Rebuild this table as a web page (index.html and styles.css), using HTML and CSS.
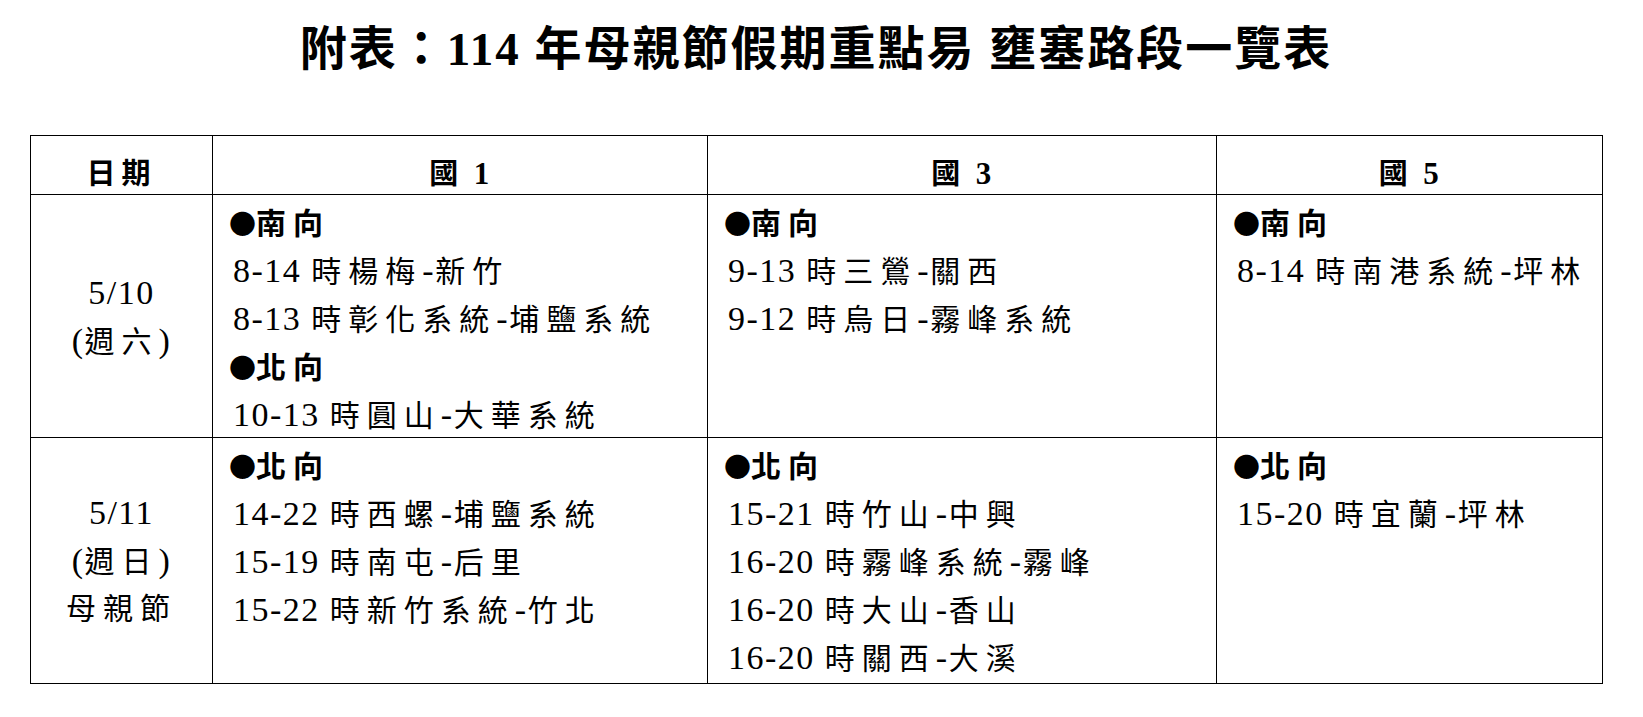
FILE: index.html
```html
<!DOCTYPE html>
<html lang="zh-Hant">
<head>
<meta charset="utf-8">
<title>附表：114 年母親節假期重點易壅塞路段一覽表</title>
<link rel="stylesheet" href="styles.css">
</head>
<body>
<div class="sheet">
  <h1 class="title">附表：114 年母親節假期重點易 壅塞路段一覽表</h1>
  <table class="grid">
    <colgroup>
      <col class="w-date">
      <col class="w-n1">
      <col class="w-n3">
      <col class="w-n5">
    </colgroup>
    <thead>
      <tr>
        <th><span class="c">日期</span></th>
        <th><span class="c">國</span> 1</th>
        <th><span class="c">國</span> 3</th>
        <th><span class="c">國</span> 5</th>
      </tr>
    </thead>
    <tbody>
      <tr>
        <td class="date">
          <div class="dl">5/10</div>
          <div class="dl">(<span class="c">週六</span>)</div>
        </td>
        <td>
          <div class="ln hd"><span class="b">●</span><span class="c">南向</span></div>
          <div class="ln">8-14 <span class="c">時楊梅</span>-<span class="c">新竹</span></div>
          <div class="ln">8-13 <span class="c">時彰化系統</span>-<span class="c">埔鹽系統</span></div>
          <div class="ln hd"><span class="b">●</span><span class="c">北向</span></div>
          <div class="ln">10-13 <span class="c">時圓山</span>-<span class="c">大華系統</span></div>
        </td>
        <td>
          <div class="ln hd"><span class="b">●</span><span class="c">南向</span></div>
          <div class="ln">9-13 <span class="c">時三鶯</span>-<span class="c">關西</span></div>
          <div class="ln">9-12 <span class="c">時烏日</span>-<span class="c">霧峰系統</span></div>
        </td>
        <td>
          <div class="ln hd"><span class="b">●</span><span class="c">南向</span></div>
          <div class="ln">8-14 <span class="c">時南港系統</span>-<span class="c">坪林</span></div>
        </td>
      </tr>
      <tr class="last">
        <td class="date">
          <div class="dl">5/11</div>
          <div class="dl">(<span class="c">週日</span>)</div>
          <div class="dl"><span class="c">母親節</span></div>
        </td>
        <td>
          <div class="ln hd"><span class="b">●</span><span class="c">北向</span></div>
          <div class="ln">14-22 <span class="c">時西螺</span>-<span class="c">埔鹽系統</span></div>
          <div class="ln">15-19 <span class="c">時南屯</span>-<span class="c">后里</span></div>
          <div class="ln">15-22 <span class="c">時新竹系統</span>-<span class="c">竹北</span></div>
        </td>
        <td>
          <div class="ln hd"><span class="b">●</span><span class="c">北向</span></div>
          <div class="ln">15-21 <span class="c">時竹山</span>-<span class="c">中興</span></div>
          <div class="ln">16-20 <span class="c">時霧峰系統</span>-<span class="c">霧峰</span></div>
          <div class="ln">16-20 <span class="c">時大山</span>-<span class="c">香山</span></div>
          <div class="ln">16-20 <span class="c">時關西</span>-<span class="c">大溪</span></div>
        </td>
        <td>
          <div class="ln hd"><span class="b">●</span><span class="c">北向</span></div>
          <div class="ln">15-20 <span class="c">時宜蘭</span>-<span class="c">坪林</span></div>
        </td>
      </tr>
    </tbody>
  </table>
</div>
</body>
</html>
```
FILE: styles.css
```css
html, body {
  margin: 0;
  padding: 0;
  background: #ffffff;
  color: #000000;
}

body {
  font-family: "Liberation Serif", "Noto Sans CJK TC", serif;
}

.sheet {
  width: 1572px;
  margin-left: 30px;
}

.title {
  margin: 19px 0 56px;
  font-size: 47px;
  line-height: 60px;
  font-weight: 700;
  letter-spacing: 2px;
  text-align: center;
  white-space: nowrap;
}

.grid {
  width: 1572px;
  border-collapse: collapse;
  table-layout: fixed;
}

.w-date { width: 182px; }
.w-n1 { width: 495px; }
.w-n3 { width: 509px; }
.w-n5 { width: 386px; }

.grid th,
.grid td {
  border: 1px solid #000000;
  padding: 2px 20px 0;
  vertical-align: top;
  text-align: left;
  font-size: 34px;
  font-weight: 400;
  letter-spacing: 1.5px;
  white-space: nowrap;
}

.grid .last td {
  padding-bottom: 3px;
}

.grid th {
  padding: 15px 0 0;
  height: 41px;
  line-height: 41px;
  text-align: center;
  font-weight: 700;
  font-size: 31px;
}

.c {
  font-family: "Noto Sans CJK TC", "Liberation Serif", sans-serif;
  font-size: 30px;
  letter-spacing: 7px;
}

.grid th .c {
  font-size: 29px;
  letter-spacing: 6px;
}

.grid .date {
  padding: 0;
  text-align: center;
  vertical-align: middle;
}

.dl {
  height: 47px;
  line-height: 47px;
}

.ln {
  height: 48px;
  line-height: 48px;
}

.hd .c {
  font-weight: 700;
}

.b {
  font-family: "Noto Sans CJK TC", sans-serif;
  font-size: 27px;
  letter-spacing: 0;
  margin-left: -4px;
}
```
